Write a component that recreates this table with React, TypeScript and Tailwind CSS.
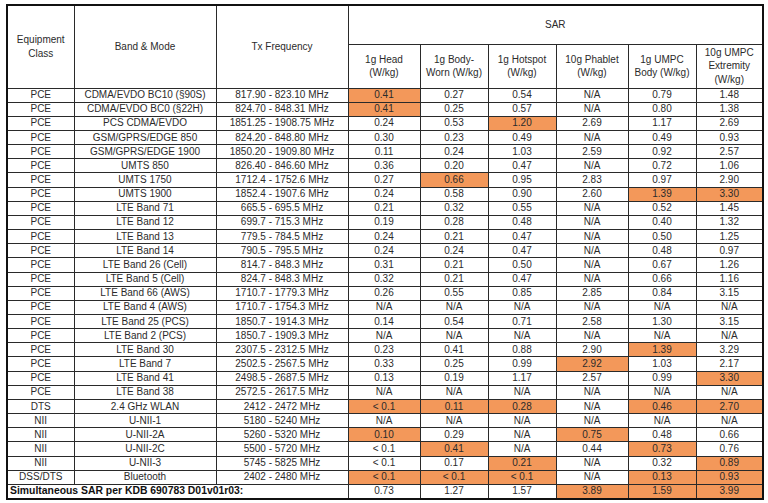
import React from "react";

type Row = [string, string, string, string[], number[]];

const NA6 = ["N/A", "N/A", "N/A", "N/A", "N/A", "N/A"];

const rows: Row[] = [
  ["PCE", "CDMA/EVDO BC10 (§90S)", "817.90 - 823.10 MHz", ["0.41", "0.27", "0.54", "N/A", "0.79", "1.48"], [0]],
  ["PCE", "CDMA/EVDO BC0 (§22H)", "824.70 - 848.31 MHz", ["0.41", "0.25", "0.57", "N/A", "0.80", "1.38"], [0]],
  ["PCE", "PCS CDMA/EVDO", "1851.25 - 1908.75 MHz", ["0.24", "0.53", "1.20", "2.69", "1.17", "2.69"], [2]],
  ["PCE", "GSM/GPRS/EDGE 850", "824.20 - 848.80 MHz", ["0.30", "0.23", "0.49", "N/A", "0.49", "0.93"], []],
  ["PCE", "GSM/GPRS/EDGE 1900", "1850.20 - 1909.80 MHz", ["0.11", "0.24", "1.03", "2.59", "0.92", "2.57"], []],
  ["PCE", "UMTS 850", "826.40 - 846.60 MHz", ["0.36", "0.20", "0.47", "N/A", "0.72", "1.06"], []],
  ["PCE", "UMTS 1750", "1712.4 - 1752.6 MHz", ["0.27", "0.66", "0.95", "2.83", "0.97", "2.90"], [1]],
  ["PCE", "UMTS 1900", "1852.4 - 1907.6 MHz", ["0.24", "0.58", "0.90", "2.60", "1.39", "3.30"], [4, 5]],
  ["PCE", "LTE Band 71", "665.5 - 695.5 MHz", ["0.21", "0.32", "0.55", "N/A", "0.52", "1.45"], []],
  ["PCE", "LTE Band 12", "699.7 - 715.3 MHz", ["0.19", "0.28", "0.48", "N/A", "0.40", "1.32"], []],
  ["PCE", "LTE Band 13", "779.5 - 784.5 MHz", ["0.24", "0.21", "0.47", "N/A", "0.50", "1.25"], []],
  ["PCE", "LTE Band 14", "790.5 - 795.5 MHz", ["0.24", "0.24", "0.47", "N/A", "0.48", "0.97"], []],
  ["PCE", "LTE Band 26 (Cell)", "814.7 - 848.3 MHz", ["0.31", "0.21", "0.50", "N/A", "0.67", "1.26"], []],
  ["PCE", "LTE Band 5 (Cell)", "824.7 - 848.3 MHz", ["0.32", "0.21", "0.47", "N/A", "0.66", "1.16"], []],
  ["PCE", "LTE Band 66 (AWS)", "1710.7 - 1779.3 MHz", ["0.26", "0.55", "0.85", "2.85", "0.84", "3.15"], []],
  ["PCE", "LTE Band 4 (AWS)", "1710.7 - 1754.3 MHz", NA6, []],
  ["PCE", "LTE Band 25 (PCS)", "1850.7 - 1914.3 MHz", ["0.14", "0.54", "0.71", "2.58", "1.30", "3.15"], []],
  ["PCE", "LTE Band 2 (PCS)", "1850.7 - 1909.3 MHz", NA6, []],
  ["PCE", "LTE Band 30", "2307.5 - 2312.5 MHz", ["0.23", "0.41", "0.88", "2.90", "1.39", "3.29"], [4]],
  ["PCE", "LTE Band 7", "2502.5 - 2567.5 MHz", ["0.33", "0.25", "0.99", "2.92", "1.03", "2.17"], [3]],
  ["PCE", "LTE Band 41", "2498.5 - 2687.5 MHz", ["0.13", "0.19", "1.17", "2.57", "0.99", "3.30"], [5]],
  ["PCE", "LTE Band 38", "2572.5 - 2617.5 MHz", NA6, []],
  ["DTS", "2.4 GHz WLAN", "2412 - 2472 MHz", ["< 0.1", "0.11", "0.28", "N/A", "0.46", "2.70"], [0, 1, 2, 4, 5]],
  ["NII", "U-NII-1", "5180 - 5240 MHz", NA6, []],
  ["NII", "U-NII-2A", "5260 - 5320 MHz", ["0.10", "0.29", "N/A", "0.75", "0.48", "0.66"], [0, 3]],
  ["NII", "U-NII-2C", "5500 - 5720 MHz", ["< 0.1", "0.41", "N/A", "0.44", "0.73", "0.76"], [1, 4]],
  ["NII", "U-NII-3", "5745 - 5825 MHz", ["< 0.1", "0.17", "0.21", "N/A", "0.32", "0.89"], [2, 5]],
  ["DSS/DTS", "Bluetooth", "2402 - 2480 MHz", ["< 0.1", "< 0.1", "< 0.1", "N/A", "0.13", "0.93"], [0, 1, 2, 4, 5]],
];

const simVals = ["0.73", "1.27", "1.57", "3.89", "1.59", "3.99"];
const simHi = [3, 4, 5];

const cell = "border border-[#2a2a2a] p-0 text-center align-middle";
const hdr = "border border-[#2a2a2a] px-0 py-0 text-center align-middle leading-[13.5px]";

export default function App() {
  return (
    <div className="w-[768px] h-[503px] bg-white pl-[6px] pt-[4px]" style={{ fontFamily: '"Liberation Sans", Arial, sans-serif' }}>
      <table className="table-fixed border-collapse border-2 border-[#111] text-[10px] text-[#2b2b2b] w-[756px]">
        <colgroup>
          <col className="w-[67px]" />
          <col className="w-[142px]" />
          <col className="w-[132px]" />
          <col className="w-[72px]" />
          <col className="w-[68px]" />
          <col className="w-[68px]" />
          <col className="w-[72px]" />
          <col className="w-[68px]" />
          <col className="w-[67px]" />
        </colgroup>
        <thead>
          <tr className="h-[39px]">
            <th rowSpan={2} className={`${hdr} font-normal`}>
              Equipment
              <br />
              Class
            </th>
            <th rowSpan={2} className={`${hdr} font-normal`}>Band &amp; Mode</th>
            <th rowSpan={2} className={`${hdr} font-normal`}>Tx Frequency</th>
            <th colSpan={6} className={`${hdr} font-normal`}>SAR</th>
          </tr>
          <tr className="h-[44px]">
            <th className={`${hdr} font-normal`}>
              1g Head
              <br />
              (W/kg)
            </th>
            <th className={`${hdr} font-normal`}>
              1g Body-
              <br />
              Worn (W/kg)
            </th>
            <th className={`${hdr} font-normal`}>
              1g Hotspot
              <br />
              (W/kg)
            </th>
            <th className={`${hdr} font-normal`}>
              10g Phablet
              <br />
              (W/kg)
            </th>
            <th className={`${hdr} font-normal`}>
              1g UMPC
              <br />
              Body (W/kg)
            </th>
            <th className={`${hdr} font-normal`}>
              10g UMPC
              <br />
              Extremity
              <br />
              (W/kg)
            </th>
          </tr>
        </thead>
        <tbody className="leading-[12px]">
          {rows.map(([cls, band, freq, vals, hi], i) => (
            <tr key={i} className="h-[14.17px]">
              <td className={cell}>{cls}</td>
              <td className={cell}>{band}</td>
              <td className={cell}>{freq}</td>
              {vals.map((v, j) => (
                <td key={j} className={`${cell} ${hi.includes(j) ? "bg-[#f3985a]" : ""}`}>
                  {v}
                </td>
              ))}
            </tr>
          ))}
          <tr className="h-[14.17px]">
            <td colSpan={3} className="border border-[#2a2a2a] p-0 pl-[2px] text-left align-middle font-bold text-[10.4px] text-[#111]">
              Simultaneous SAR per KDB 690783 D01v01r03:
            </td>
            {simVals.map((v, j) => (
              <td key={j} className={`${cell} ${simHi.includes(j) ? "bg-[#f3985a]" : ""}`}>
                {v}
              </td>
            ))}
          </tr>
        </tbody>
      </table>
    </div>
  );
}
